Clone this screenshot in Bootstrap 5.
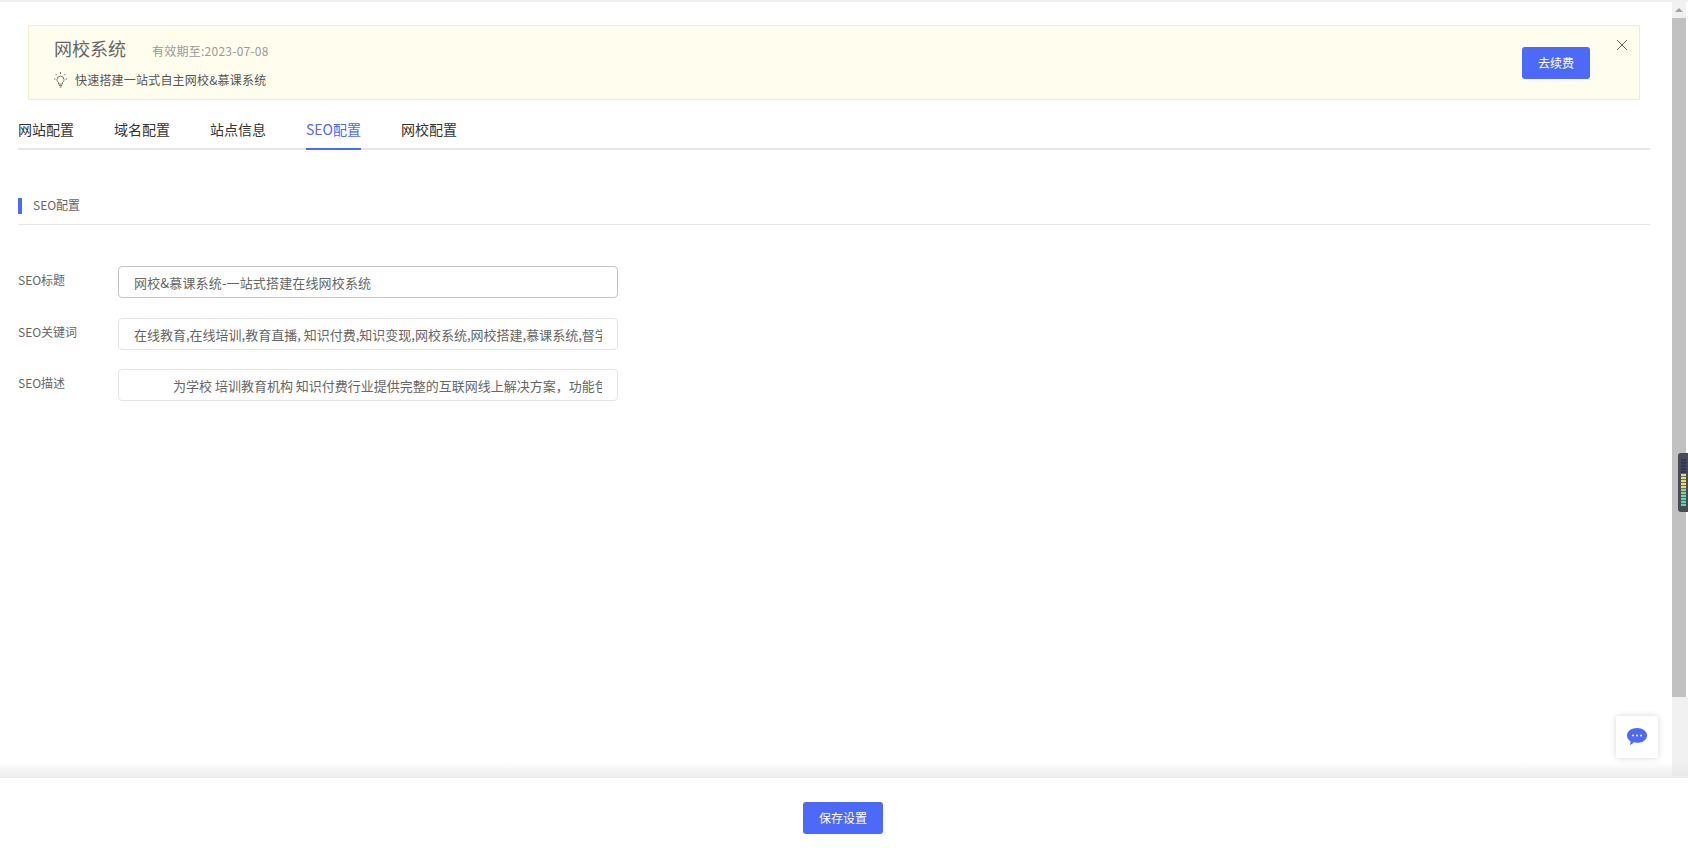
<!DOCTYPE html>
<html lang="zh-CN">
<head>
<meta charset="utf-8">
<title>SEO配置</title>
<link href="https://cdn.jsdelivr.net/npm/bootstrap@5.3.0/dist/css/bootstrap.min.css" rel="stylesheet">
<style>
html,body{height:100%;overflow:hidden}
body{font-family:"Noto Sans CJK SC","Liberation Sans",sans-serif;color:#333;background:#fff;font-size:13px}
.app-shell{height:848px;border-top:2px solid #eef0f2;position:relative}
.upper-area{height:776px}
.main-pane{width:1672px;padding:23px 22px 0 18px}
.promo{margin:0 10px;height:75px;background:#fffdee;border:1px solid #f5ecc9;padding:0 49px 0 25px;position:relative}
.promo-left{margin-top:2px;gap:13px}
.promo-head{height:20px}
.promo-title{font-size:18px;color:#666;line-height:20px;margin-top:-2px}
.promo-date{font-size:12px;color:#999;margin:3px 0 0 26px;line-height:18px;letter-spacing:.25px}
.promo-sub{font-size:12px;color:#555;line-height:16px;gap:8px;letter-spacing:.2px}
.promo-btn,.save-btn{width:68px;height:32px;padding:0;font-size:12px;color:#fff;background:#4d69fa;border:0;border-radius:3px}
.save-btn{width:80px}
.promo-close{position:absolute;right:10px;top:12px;width:14px;height:14px;padding:0;border:0;background:none;line-height:0}
.tabs-bar{margin-top:10px;height:40px;border-bottom:2px solid #e4e6ea;gap:40px;flex-wrap:nowrap}
.tab-item{display:block;padding:0;height:40px;line-height:39px;font-size:14px;color:#333;text-decoration:none}
.tab-item.on{color:#4d69fa;border-bottom:2px solid #4d69fa}
.section-head{margin-top:48px;height:27px;border-bottom:1px solid #e6e6e6;font-size:12px;color:#666;gap:11px;align-items:flex-start}
.section-mark{width:4px;height:16px;background:#4d69fa}
.section-text{line-height:13px}
.form-zone{margin-top:41px;gap:20px}
.field-label{width:100px;font-size:12px;color:#666;padding-bottom:4px}
.field-input{width:500px;height:32px;font-size:13px;color:#666;padding:0 15px;border:1px solid #e5e5e5;border-radius:4px;box-shadow:none}
.field-input.hot{border-color:#c4c4c4;letter-spacing:.15px}
.row-last{margin-top:-1px}
.bar-rail{width:16px;background:#fff;position:relative}
.bar-up{height:16px;width:14px;background:#f1f1f1;display:flex;align-items:center;justify-content:center}
.bar-tri{width:0;height:0;border-left:4px solid transparent;border-right:4px solid transparent;border-bottom:4px solid #a3a3a3}
.bar-thumb{width:14px;height:679px;background:#c1c1c1}
.bar-rest{height:79px;background:#f1f1f1}
.meter{position:absolute;left:1678px;top:451px;width:10px;height:59px;background:#484b53;border-radius:3px 0 0 3px;padding:6px 0 6px 3px}
.meter-bars{width:5px;height:47px;background:repeating-linear-gradient(to bottom,transparent 0 2px,rgba(72,75,83,.75) 2px 3px),linear-gradient(to bottom,#2f3566 0 30%,#e6dc6c 30% 64%,#7fd58f 64% 82%,#55d6b4 82%)}
.chat-box{position:absolute;left:1616px;top:714px;width:42px;height:42px;background:#fff;box-shadow:0 0 6px rgba(0,0,0,.16);border-radius:2px}
.foot-bar{height:70px;background:#fff;position:relative;padding:24px 2px 0 0}
.foot-bar::before{content:"";position:absolute;left:0;right:0;top:-16px;height:16px;background:linear-gradient(to bottom,rgba(225,225,225,0),rgba(225,225,225,.65))}
</style>
</head>
<body>
<div class="app-shell d-flex flex-column">
  <div class="upper-area d-flex">
    <div class="main-pane">
      <div class="promo d-flex align-items-center justify-content-between">
        <div class="promo-left d-flex flex-column">
          <div class="promo-head d-flex align-items-center"><span class="promo-title">网校系统</span><span class="promo-date">有效期至:2023-07-08</span></div>
          <div class="d-flex align-items-center promo-sub">
            <svg width="13" height="16" viewBox="0 0 13 16" fill="none" stroke="#777" stroke-width="1"><path d="M4.5 10.5C3.6 9.7 3 8.800 3 7.600a3.500 3.500 0 0 1 7 0c0 1.200-.6 2.100-1.500 2.900v1.600h-4z"/><path d="M5 13.500h3M5.600 15h1.800M6.500 0v2M1.600 2l1.200 1.300M11.400 2l-1.200 1.300M0 7h1.400M11.600 7H13"/></svg>
            <span>快速搭建一站式自主网校&amp;慕课系统</span>
          </div>
        </div>
        <button type="button" class="btn promo-btn">去续费</button>
        <button type="button" class="promo-close" aria-label="关闭"><svg width="14" height="14" viewBox="0 0 14 14" stroke="#666" stroke-width="1"><path d="M2 2l10 10M12 2L2 12"/></svg></button>
      </div>

      <nav class="nav tabs-bar">
        <a class="tab-item" href="#">网站配置</a>
        <a class="tab-item" href="#">域名配置</a>
        <a class="tab-item" href="#">站点信息</a>
        <a class="tab-item on" href="#">SEO配置</a>
        <a class="tab-item" href="#">网校配置</a>
      </nav>

      <div class="section-head d-flex">
        <span class="section-mark"></span><span class="section-text">SEO配置</span>
      </div>

      <form class="form-zone d-flex flex-column">
        <div class="d-flex align-items-center"><label class="field-label">SEO标题</label><input class="form-control field-input hot" value="网校&amp;慕课系统-一站式搭建在线网校系统"></div>
        <div class="d-flex align-items-center"><label class="field-label">SEO关键词</label><input class="form-control field-input" value="在线教育,在线培训,教育直播, 知识付费,知识变现,网校系统,网校搭建,慕课系统,督学系统"></div>
        <div class="d-flex align-items-center row-last"><label class="field-label">SEO描述</label><input class="form-control field-input" value="　　　为学校 培训教育机构 知识付费行业提供完整的互联网线上解决方案，功能包括"></div>
      </form>
    </div>
    <div class="bar-rail">
      <div class="bar-up"><span class="bar-tri"></span></div>
      <div class="bar-thumb"></div>
      <div class="bar-rest"></div>
    </div>
  </div>
  <div class="foot-bar d-flex align-items-start justify-content-center">
    <button type="button" class="btn save-btn">保存设置</button>
  </div>
  <div class="meter"><div class="meter-bars"></div></div>
  <div class="chat-box d-flex align-items-center justify-content-center">
    <svg width="20" height="18" viewBox="0 0 20 18"><path fill="#4d69f5" d="M10 0c5.500 0 10 3.200 10 7.400s-4.500 7.400-10 7.400c-1.200 0-2.300-.15-3.300-.45C5.600 15.800 4.300 16.700 2.800 17c.5-1 .8-2.200.8-3.700C1.400 12 0 9.900 0 7.400 0 3.200 4.500 0 10 0z"/><circle cx="6" cy="7.500" r="1" fill="#fff"/><circle cx="10" cy="7.500" r="1" fill="#fff"/><circle cx="14" cy="7.500" r="1" fill="#fff"/></svg>
  </div>
</div>
<script src="https://cdn.jsdelivr.net/npm/bootstrap@5.3.0/dist/js/bootstrap.bundle.min.js"></script>
</body>
</html>
